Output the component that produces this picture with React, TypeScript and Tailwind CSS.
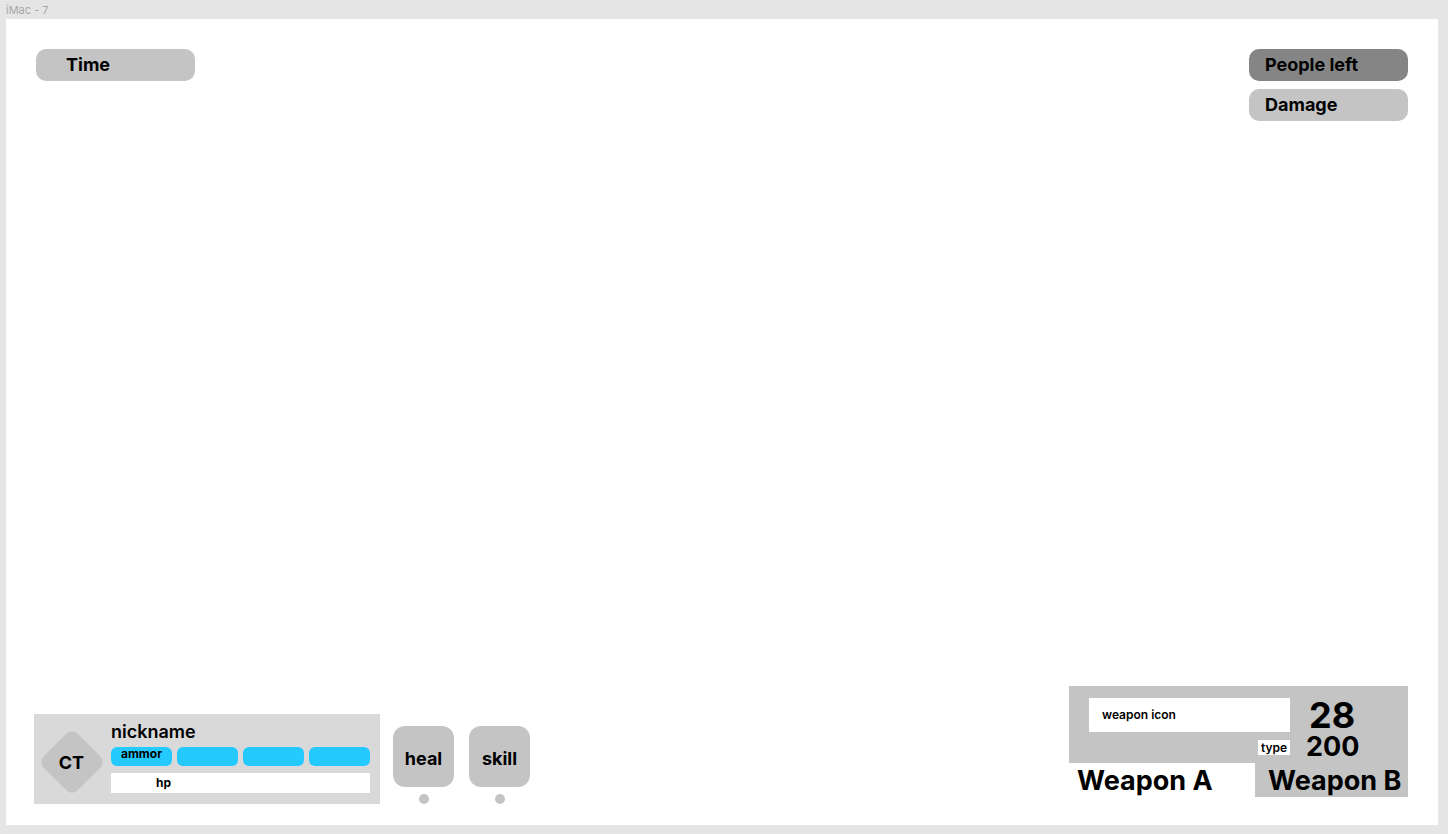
import React from "react";

const font = { fontFamily: "Inter, 'Liberation Sans', sans-serif" };

const StatPill = ({ label, dark }: { label: string; dark?: boolean }) => (
  <div
    className={`flex h-[32px] w-[159px] items-center rounded-[10px] pb-[1px] pl-[16px] text-[18px] font-bold text-black ${
      dark ? "bg-[#858585]" : "bg-[#c4c4c4]"
    }`}
  >
    {label}
  </div>
);

const ActionButton = ({ label }: { label: string }) => (
  <div className="flex flex-col items-center gap-[7px]">
    <div className="flex h-[61px] w-[61px] items-center justify-center rounded-[12px] bg-[#c4c4c4] pt-[3px] text-[18px] font-bold text-black">
      {label}
    </div>
    <div className="h-[10px] w-[10px] rounded-full bg-[#c4c4c4]" />
  </div>
);

const PlayerPanel = () => (
  <div className="flex h-[90px] w-[346px] items-start bg-[#d9d9d9]">
    <div className="ml-[7px] mt-[17px] flex h-[62px] w-[62px] items-center justify-center">
      <div className="flex h-[48px] w-[48px] rotate-45 items-center justify-center rounded-[8px] bg-[#c4c4c4]">
        <span className="-rotate-45 text-[18px] font-bold text-black">CT</span>
      </div>
    </div>

    <div className="ml-[8px] flex w-[259px] flex-col pt-[7px]">
      <p className="text-[18px] font-semibold leading-[22px] text-black">nickname</p>

      <div className="mt-[4px] flex gap-[5px]">
        <div className="flex h-[19px] w-[61px] items-start justify-center rounded-[6px] bg-[#24c9ff] text-[12px] font-bold leading-[14px] text-black">
          ammor
        </div>
        <div className="h-[19px] w-[61px] rounded-[6px] bg-[#24c9ff]" />
        <div className="h-[19px] w-[61px] rounded-[6px] bg-[#24c9ff]" />
        <div className="h-[19px] w-[61px] rounded-[6px] bg-[#24c9ff]" />
      </div>

      <div className="mt-[7px] flex h-[20px] w-full items-center bg-white pl-[45px] text-[12px] font-bold text-black">
        hp
      </div>
    </div>
  </div>
);

const WeaponPanel = () => (
  <div className="flex w-[339px] flex-col">
    <div className="flex h-[77px] bg-[#c4c4c4]">
      <div className="flex flex-col pl-[20px] pt-[12px]">
        <div className="flex h-[34px] w-[201px] items-center bg-white pl-[13px] text-[12px] font-semibold text-black">
          weapon icon
        </div>
        <div className="mt-[8px] flex h-[15px] w-[32px] items-center justify-center self-end bg-white text-[12px] font-semibold text-black">
          type
        </div>
      </div>
      <div className="ml-[16px] flex flex-col pt-[13px] font-bold text-black">
        <span className="ml-[3px] text-[36px] leading-[32px]">28</span>
        <span className="mt-[2px] text-[27px] leading-[28px]">200</span>
      </div>
    </div>
    <div className="flex h-[34px]">
      <div className="w-[186px] bg-white pl-[8px] pt-[4px] text-[27px] font-bold leading-[28px] text-black">
        Weapon A
      </div>
      <div className="flex-1 bg-[#c4c4c4] pl-[13px] pt-[4px] text-[27px] font-bold leading-[28px] text-black">
        Weapon B
      </div>
    </div>
  </div>
);

export default function App() {
  return (
    <div className="flex h-[834px] w-full flex-col bg-[#e5e5e5]" style={font}>
      <div className="h-[19px] pl-[6px] pt-[4px] text-[11px] leading-[13px] text-[#a8a8a8]">
        iMac - 7
      </div>

      <div className="ml-[6px] flex h-[806px] w-[1432px] flex-col justify-between bg-white">
        <div className="flex items-start justify-between px-[30px] pt-[30px]">
          <div className="flex h-[32px] w-[159px] items-center rounded-[10px] bg-[#c4c4c4] pb-[1px] pl-[30px] text-[18px] font-bold text-black">
            Time
          </div>
          <div className="flex flex-col gap-[8px]">
            <StatPill label="People left" dark />
            <StatPill label="Damage" />
          </div>
        </div>

        <div className="flex items-end justify-between pb-[21px]">
          <div className="ml-[28px] flex items-start">
            <PlayerPanel />
            <div className="ml-[13px] mt-[12px] flex gap-[15px]">
              <ActionButton label="heal" />
              <ActionButton label="skill" />
            </div>
          </div>

          <div className="mb-[7px] mr-[30px]">
            <WeaponPanel />
          </div>
        </div>
      </div>
    </div>
  );
}
